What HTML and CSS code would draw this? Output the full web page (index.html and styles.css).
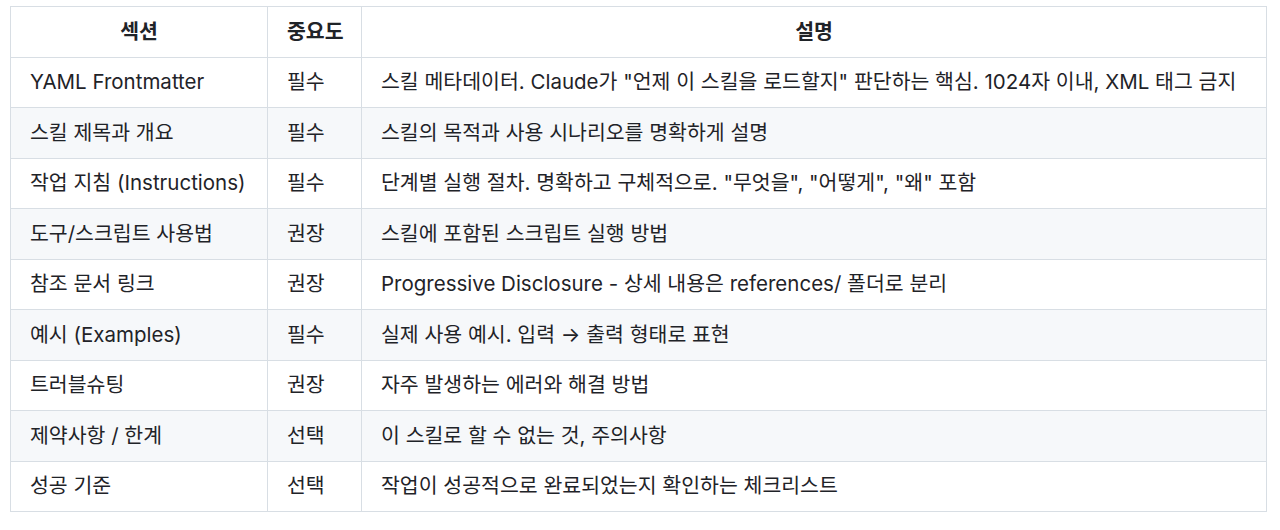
FILE: index.html
```html
<!DOCTYPE html>
<html lang="ko">
<head>
<meta charset="utf-8">
<link rel="stylesheet" href="styles.css">
</head>
<body>
<table class="tbl">
  <colgroup>
    <col class="c1"><col class="c2"><col class="c3">
  </colgroup>
  <thead>
    <tr><th>섹션</th><th>중요도</th><th>설명</th></tr>
  </thead>
  <tbody>
    <tr><td>YAML Frontmatter</td><td>필수</td><td>스킬 메타데이터. Claude가 "언제 이 스킬을 로드할지" 판단하는 핵심. 1024자 이내, XML 태그 금지</td></tr>
    <tr><td>스킬 제목과 개요</td><td>필수</td><td>스킬의 목적과 사용 시나리오를 명확하게 설명</td></tr>
    <tr><td>작업 지침 (Instructions)</td><td>필수</td><td>단계별 실행 절차. 명확하고 구체적으로. "무엇을", "어떻게", "왜" 포함</td></tr>
    <tr><td>도구/스크립트 사용법</td><td>권장</td><td>스킬에 포함된 스크립트 실행 방법</td></tr>
    <tr><td>참조 문서 링크</td><td>권장</td><td>Progressive Disclosure - 상세 내용은 references/ 폴더로 분리</td></tr>
    <tr><td>예시 (Examples)</td><td>필수</td><td>실제 사용 예시. 입력 → 출력 형태로 표현</td></tr>
    <tr><td>트러블슈팅</td><td>권장</td><td>자주 발생하는 에러와 해결 방법</td></tr>
    <tr><td>제약사항 / 한계</td><td>선택</td><td>이 스킬로 할 수 없는 것, 주의사항</td></tr>
    <tr><td>성공 기준</td><td>선택</td><td>작업이 성공적으로 완료되었는지 확인하는 체크리스트</td></tr>
  </tbody>
</table>
</body>
</html>
```

FILE: styles.css
```css
html, body {
  margin: 0;
  padding: 0;
  background: #ffffff;
}
body {
  padding: 6px 10px;
  font-family: Inter, "Noto Sans CJK KR", sans-serif;
  font-size: 20.5px;
  color: #1f2328;
}
.tbl {
  border-collapse: collapse;
  table-layout: fixed;
  width: 1256px;
}
.c1 { width: 257px; }
.c2 { width: 94px; }
.c3 { width: 905px; }
.tbl th, .tbl td {
  border: 1px solid #d8dee4;
  padding: 0 19px;
  height: 49.5px;
  line-height: 26px;
  white-space: nowrap;
  overflow: hidden;
}
.tbl th {
  font-weight: 600;
  text-align: center;
}
.tbl td {
  text-align: left;
  font-weight: 400;
}
.tbl tbody tr:nth-child(even) {
  background: #f6f8fa;
}
```
